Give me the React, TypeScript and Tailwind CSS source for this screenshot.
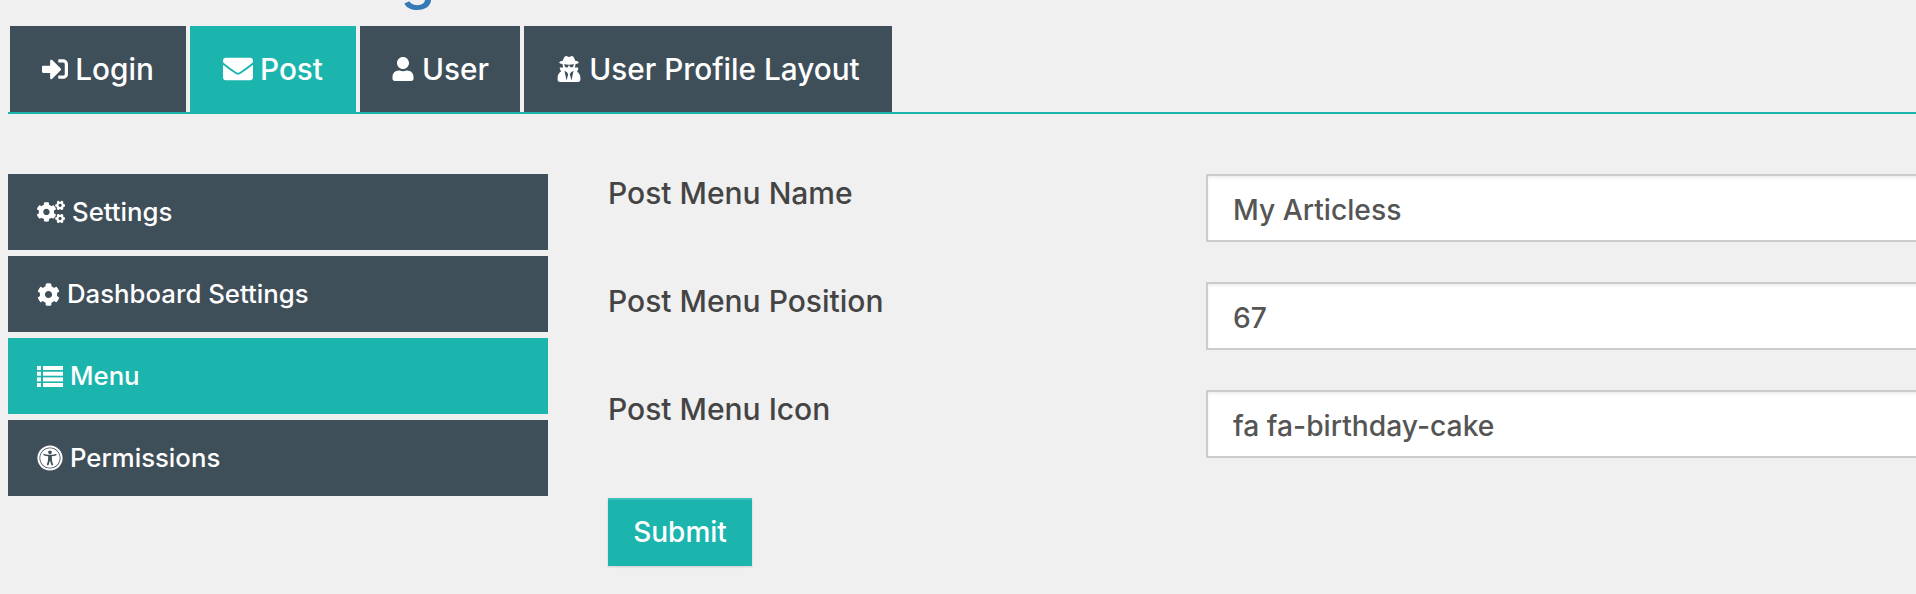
import { FaSignInAlt, FaEnvelope, FaUser, FaUserSecret, FaCogs, FaCog, FaUniversalAccess } from 'react-icons/fa';

const ListIcon = () => (
    <svg width="26" height="21" viewBox="0 0 26 21" fill="currentColor">
        <rect x="0" y="0" width="4" height="4" />
        <rect x="6" y="0" width="20" height="4" />
        <rect x="0" y="5.7" width="4" height="4" />
        <rect x="6" y="5.7" width="20" height="4" />
        <rect x="0" y="11.4" width="4" height="4" />
        <rect x="6" y="11.4" width="20" height="4" />
        <rect x="0" y="17" width="4" height="4" />
        <rect x="6" y="17" width="20" height="4" />
    </svg>
);

const tabs = [
    { label: 'Login', icon: <FaSignInAlt className="text-[26px]" />, w: 'w-[176px]' },
    { label: 'Post', icon: <FaEnvelope className="text-[30px]" />, w: 'w-[166px]', active: true },
    { label: 'User', icon: <FaUser className="text-[24px]" />, w: 'w-[160px]' },
    { label: 'User Profile Layout', icon: <FaUserSecret className="text-[26px]" />, w: 'w-[368px]' },
];

const sideItems = [
    { label: 'Settings', icon: <FaCogs className="text-[28px]" /> },
    { label: 'Dashboard Settings', icon: <FaCog className="text-[23px]" /> },
    { label: 'Menu', icon: <ListIcon />, active: true },
    { label: 'Permissions', icon: <FaUniversalAccess className="text-[26px]" /> },
];

const fields = [
    { label: 'Post Menu Name', value: 'My Articless' },
    { label: 'Post Menu Position', value: '67' },
    { label: 'Post Menu Icon', value: 'fa fa-birthday-cake' },
];

const App = () => {
    return (
        <div className="h-[594px] w-[1916px] overflow-hidden bg-[#f0f0f0] font-['Inter',sans-serif]">
            <div className="h-[26px] overflow-hidden pl-2">
                <h1 className="-mt-[54px] text-[56px] leading-[64px] font-medium text-[#337ab7]">Account Settings</h1>
            </div>

            <nav className="ml-2 flex gap-1 border-b-2 border-[#1cb5ae] pl-0.5">
                {tabs.map((tab) => (
                    <div
                        key={tab.label}
                        className={`flex h-[86px] items-center justify-center gap-[7px] text-[29.75px] font-medium text-white ${tab.w} ${tab.active ? 'bg-[#1cb5ae]' : 'bg-[#3f4f59]'}`}
                    >
                        {tab.icon}
                        <span>{tab.label}</span>
                    </div>
                ))}
            </nav>

            <div className="mt-[60px] flex pl-2">
                <aside className="flex w-[540px] shrink-0 flex-col gap-1.5">
                    {sideItems.map((item) => (
                        <div
                            key={item.label}
                            className={`flex h-[76px] items-center gap-[7px] pl-[29px] text-[25.75px] font-medium text-white ${item.active ? 'bg-[#1cb5ae]' : 'bg-[#3f4f59]'}`}
                        >
                            {item.icon}
                            <span className="pt-px">{item.label}</span>
                        </div>
                    ))}
                </aside>

                <form className="ml-[60px] min-w-0 flex-1">
                    {fields.map((field) => (
                        <div key={field.label} className="mb-10 flex h-[68px]">
                            <label className="w-[598px] shrink-0 text-[30px] leading-[38px] font-medium text-[#444444]">
                                {field.label}
                            </label>
                            <input
                                readOnly
                                value={field.value}
                                className="h-[68px] w-[1000px] shrink-0 border-2 border-[#cccccc] bg-white px-[25px] pt-[3px] text-[28.25px] font-medium text-[#555555] shadow-[inset_0_2px_3px_rgba(0,0,0,0.07)] outline-none"
                            />
                        </div>
                    ))}
                    <button
                        type="button"
                        className="h-[68px] w-[144px] bg-[#1cb5ae] text-[28px] font-medium text-white shadow-[inset_0_2px_0_rgba(255,255,255,0.15),0_1px_2px_rgba(0,0,0,0.15)]"
                    >
                        Submit
                    </button>
                </form>
            </div>
        </div>
    );
};

export default App;
